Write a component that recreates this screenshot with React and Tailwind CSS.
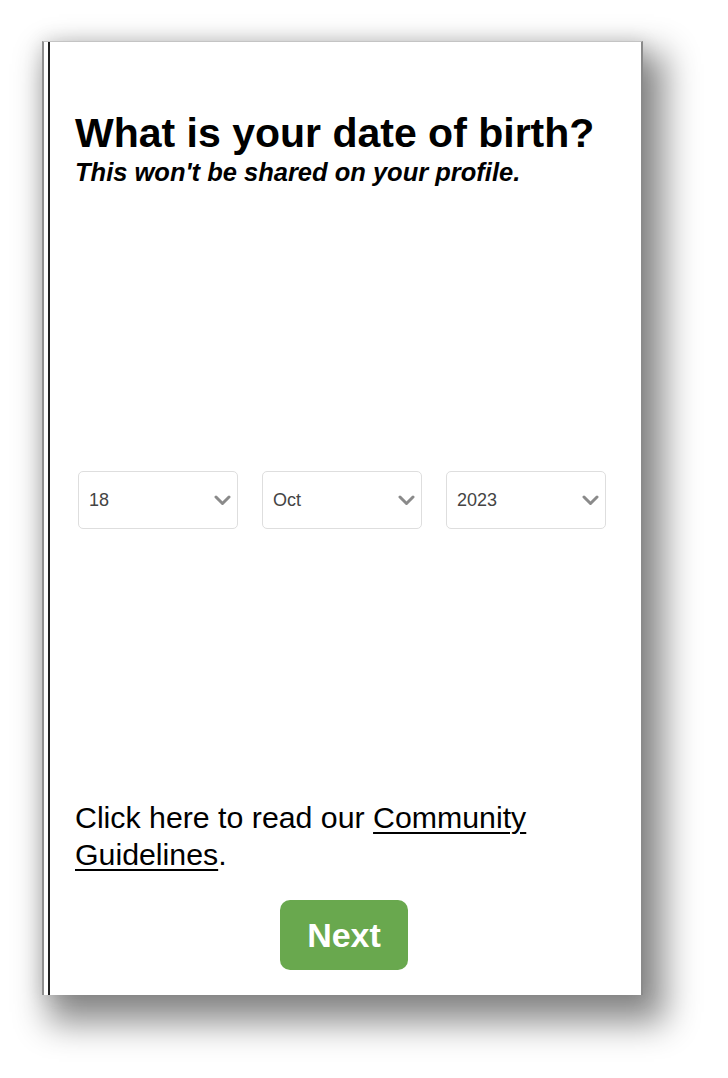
import React from "react";

function Chevron() {
  return (
    <svg width="17" height="11" viewBox="0 0 17 11" fill="none">
      <path d="M2 2 L8.5 8.5 L15 2" stroke="#8a8a8a" strokeWidth="3" strokeLinecap="round" strokeLinejoin="round" />
    </svg>
  );
}

function Select({ value }) {
  return (
    <div className="w-[160px] h-[58px] border border-[#dedede] rounded-[5px] flex items-center justify-between pl-[10px] pr-[6px] bg-white">
      <span className="text-[18px] text-[#444] leading-none">{value}</span>
      <Chevron />
    </div>
  );
}

export default function App() {
  return (
    <div className="w-[728px] h-[1078px] bg-white pt-[41px] pl-[42px] overflow-hidden" style={{ fontFamily: '"Liberation Sans", Arial, sans-serif' }}>
      <div className="w-[601px] h-[954px] bg-white border-l-2 border-l-[#8f8f8f] border-r-2 border-r-[#8a8a8a] border-t border-t-[#c4c4c4] pl-[4px] flex shadow-[14px_20px_32px_8px_rgba(0,0,0,0.45),0_0_18px_rgba(0,0,0,0.12)]">
        <div className="flex-1 border-l-2 border-l-[#222] flex flex-col pl-[25px] pt-[69px]">
          <h1 className="text-[41px] leading-[44px] font-bold text-black">What is your date of birth?</h1>
          <p className="mt-[2px] text-[25.5px] leading-[30px] font-bold italic text-black">This won't be shared on your profile.</p>
          <div className="mt-[284px] ml-[3px] flex gap-[24px]">
            <Select value="18" />
            <Select value="Oct" />
            <Select value="2023" />
          </div>
          <p className="mt-[270px] text-[30.3px] leading-[37px] text-black pr-[40px]">
            Click here to read our{" "}
            <span className="underline decoration-[2px] underline-offset-[4px]">Community Guidelines</span>.
          </p>
          <div className="mt-[27px] ml-[205px]">
            <button className="w-[128px] h-[70px] rounded-[10px] bg-[#69a84e] text-white text-[34px] font-bold leading-none flex items-center justify-center">
              Next
            </button>
          </div>
        </div>
      </div>
    </div>
  );
}
